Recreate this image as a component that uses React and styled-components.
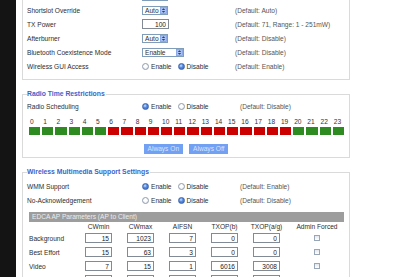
import React from 'react';
import styled, { createGlobalStyle } from 'styled-components';

const Global = createGlobalStyle`
  html, body { margin: 0; padding: 0; background: #fff; }
  body {
    font-family: "Liberation Sans", Arial, sans-serif;
    font-size: 6.6px;
    color: #2e2e2e;
    overflow: hidden;
  }
`;

const Page = styled.div`
  display: flex;
  height: 277px;
  overflow: hidden;
`;

const Sidebar = styled.div`
  width: 16px;
  flex: none;
  background: #141414;
`;

const Main = styled.div`
  flex: 1;
  padding-left: 6px;
`;

// page is scrolled, first section starts above the window
const Content = styled.div`
  width: 328px;
  margin-top: -22px;
  display: flex;
  flex-direction: column;
  gap: 10px;
`;

const Fieldset = styled.fieldset`
  margin: 0;
  min-width: 0;
  border: 1px solid #dadada;
  padding: ${p => p.$top}px 4px ${p => p.$bottom}px 4px;
`;

const Legend = styled.legend`
  color: #3a63cc;
  font-weight: bold;
  font-size: 6.8px;
  line-height: 8px;
  padding: 0 1px 0 0;
`;

const Row = styled.div`
  display: grid;
  grid-template-columns: 115px ${p => p.$ctl || 98}px 1fr;
  align-items: center;
  height: 14px;
`;

const Label = styled.div`
  white-space: nowrap;
`;

const Hint = styled.div`
  color: #555;
  white-space: nowrap;
`;

const SelectBox = styled.div`
  box-sizing: border-box;
  width: ${p => p.$w}px;
  height: 9px;
  border: 1px solid #7f9db9;
  background: #fff;
  display: flex;
  align-items: center;
  justify-content: space-between;
  padding-left: 2px;
`;

const SelectArrow = styled.svg`
  width: 7px;
  height: 7px;
  display: block;
`;

const TextBox = styled.input`
  box-sizing: border-box;
  width: ${p => p.$w || 27}px;
  height: 10px;
  margin: 0;
  padding: 0 2px 0 0;
  border: 1px solid #828a96;
  background: #fff;
  font: inherit;
  color: #222;
  text-align: right;
  outline: none;
`;

const RadioGroup = styled.div`
  display: flex;
  align-items: center;
  white-space: nowrap;
`;

const RadioItem = styled.label`
  display: inline-flex;
  align-items: center;
  gap: 2px;
  margin-right: 6px;
`;

const RadioDot = styled.span`
  box-sizing: border-box;
  width: 7px;
  height: 7px;
  border-radius: 50%;
  border: 1px solid ${p => (p.$on ? '#3b64b0' : '#8f9cad')};
  background: ${p =>
    p.$on
      ? 'radial-gradient(circle at 40% 35%, #d7e5ff 0, #5b8ee0 40%, #2c5cb8 100%)'
      : 'radial-gradient(circle at 45% 40%, #fff 30%, #dde2ea 100%)'};
`;

const Hours = styled.div`
  display: grid;
  grid-template-columns: repeat(24, 1fr);
  column-gap: 2px;
  row-gap: 2px;
  width: 315px;
  margin: 5px 0 0 2px;
`;

const HourNum = styled.div`
  height: 7px;
  line-height: 7px;
  padding-left: 1px;
  color: #333;
`;

const HourCell = styled.div`
  height: 8px;
  background: ${p => (p.$on ? '#2e8b22' : '#cc0000')};
`;

const ButtonRow = styled.div`
  display: flex;
  justify-content: center;
  gap: 6px;
  margin-top: 9px;
`;

const FlatButton = styled.div`
  height: 10px;
  line-height: 10px;
  padding: 0 4px;
  background: #72a0f2;
  color: #d6e4ff;
  white-space: nowrap;
`;

const TableHead = styled.div`
  margin: 5px 0 0 2px;
  width: 315px;
  height: 10px;
  line-height: 10px;
  background: #9d9d9d;
  color: #ececec;
  padding-left: 3px;
  box-sizing: border-box;
`;

const Grid = styled.div`
  display: grid;
  grid-template-columns: 56px repeat(5, 42px) 44px;
  align-items: center;
  margin-left: 2px;
  height: ${p => p.$h || 14}px;
`;

const ColHead = styled.div`
  width: 27px;
  white-space: nowrap;
  display: flex;
  justify-content: center;
`;

const Cell = styled.div`
  display: flex;
  white-space: nowrap;
  justify-content: ${p => (p.$center ? 'center' : 'flex-start')};
`;

const Check = styled.span`
  box-sizing: border-box;
  width: 6px;
  height: 6px;
  border: 1px solid #98a6b8;
  background: linear-gradient(#e3e7ee, #fff);
`;

const Select = ({ w, value }) => (
  <SelectBox $w={w}>
    <span>{value}</span>
    <SelectArrow viewBox="0 0 7 7">
      <rect x="0" y="0" width="7" height="7" fill="#a9c1f2" />
      <rect x="0.5" y="0.5" width="6" height="6" fill="none" stroke="#7c9ce0" strokeWidth="0.6" />
      <path d="M3.5 1.2 L5.2 3 L1.8 3 Z" fill="#2a3f80" />
      <path d="M3.5 5.8 L5.2 4 L1.8 4 Z" fill="#2a3f80" />
    </SelectArrow>
  </SelectBox>
);

const Radios = ({ value }) => (
  <RadioGroup>
    <RadioItem><RadioDot $on={value === 'on'} />Enable</RadioItem>
    <RadioItem><RadioDot $on={value === 'off'} />Disable</RadioItem>
  </RadioGroup>
);

const hours = Array.from({ length: 24 }, (_, i) => i);
// last row only shows the top edge of its inputs
const edca = [
  ['Background', 15, 1023, 7, 0, 0],
  ['Best Effort', 15, 63, 3, 0, 0],
  ['Video', 7, 15, 1, 6016, 3008],
  ['', '', '', '', '', ''],
];

export default function App() {
  return (
    <>
      <Global />
      <Page>
        <Sidebar />
        <Main>
          <Content>
            <Fieldset $top={3} $bottom={6}>
              <Legend>&nbsp;</Legend>
              {/* row scrolled above the window: only its select's lower edge shows */}
              <Row $ctl={93}>
                <div />
                <Select w={26} value="" />
                <div />
              </Row>
              <Row $ctl={93}>
                <Label>Shortslot Override</Label>
                <Select w={26} value="Auto" />
                <Hint>(Default: Auto)</Hint>
              </Row>
              <Row $ctl={93}>
                <Label>TX Power</Label>
                <TextBox defaultValue="100" readOnly />
                <Hint>(Default: 71, Range: 1 - 251mW)</Hint>
              </Row>
              <Row $ctl={93}>
                <Label>Afterburner</Label>
                <Select w={26} value="Auto" />
                <Hint>(Default: Disable)</Hint>
              </Row>
              <Row $ctl={93}>
                <Label>Bluetooth Coexistence Mode</Label>
                <Select w={42} value="Enable" />
                <Hint>(Default: Disable)</Hint>
              </Row>
              <Row $ctl={93}>
                <Label>Wireless GUI Access</Label>
                <Radios value="off" />
                <Hint>(Default: Enable)</Hint>
              </Row>
            </Fieldset>

            <Fieldset $top={1} $bottom={3}>
              <Legend>Radio Time Restrictions</Legend>
              <Row>
                <Label>Radio Scheduling</Label>
                <Radios value="on" />
                <Hint>(Default: Disable)</Hint>
              </Row>
              <Hours>
                {hours.map(h => <HourNum key={'n' + h}>{h}</HourNum>)}
                {hours.map(h => <HourCell key={'c' + h} $on={h < 6 || h > 19} />)}
              </Hours>
              <ButtonRow>
                <FlatButton>Always On</FlatButton>
                <FlatButton>Always Off</FlatButton>
              </ButtonRow>
            </Fieldset>

            <Fieldset $top={3} $bottom={4}>
              <Legend>Wireless Multimedia Support Settings</Legend>
              <Row>
                <Label>WMM Support</Label>
                <Radios value="on" />
                <Hint>(Default: Enable)</Hint>
              </Row>
              <Row>
                <Label>No-Acknowledgement</Label>
                <Radios value="off" />
                <Hint>(Default: Disable)</Hint>
              </Row>
              <TableHead>EDCA AP Parameters (AP to Client)</TableHead>
              <Grid $h={9}>
                <div />
                <ColHead>CWmin</ColHead>
                <ColHead>CWmax</ColHead>
                <ColHead>AIFSN</ColHead>
                <ColHead>TXOP(b)</ColHead>
                <ColHead>TXOP(a/g)</ColHead>
                <Cell $center>Admin Forced</Cell>
              </Grid>
              {edca.map(([name, ...vals], r) => (
                <Grid key={r}>
                  <Label>{name}</Label>
                  {vals.map((v, i) => (
                    <Cell key={i}><TextBox defaultValue={v} readOnly /></Cell>
                  ))}
                  <Cell $center><Check /></Cell>
                </Grid>
              ))}
            </Fieldset>
          </Content>
        </Main>
      </Page>
    </>
  );
}
